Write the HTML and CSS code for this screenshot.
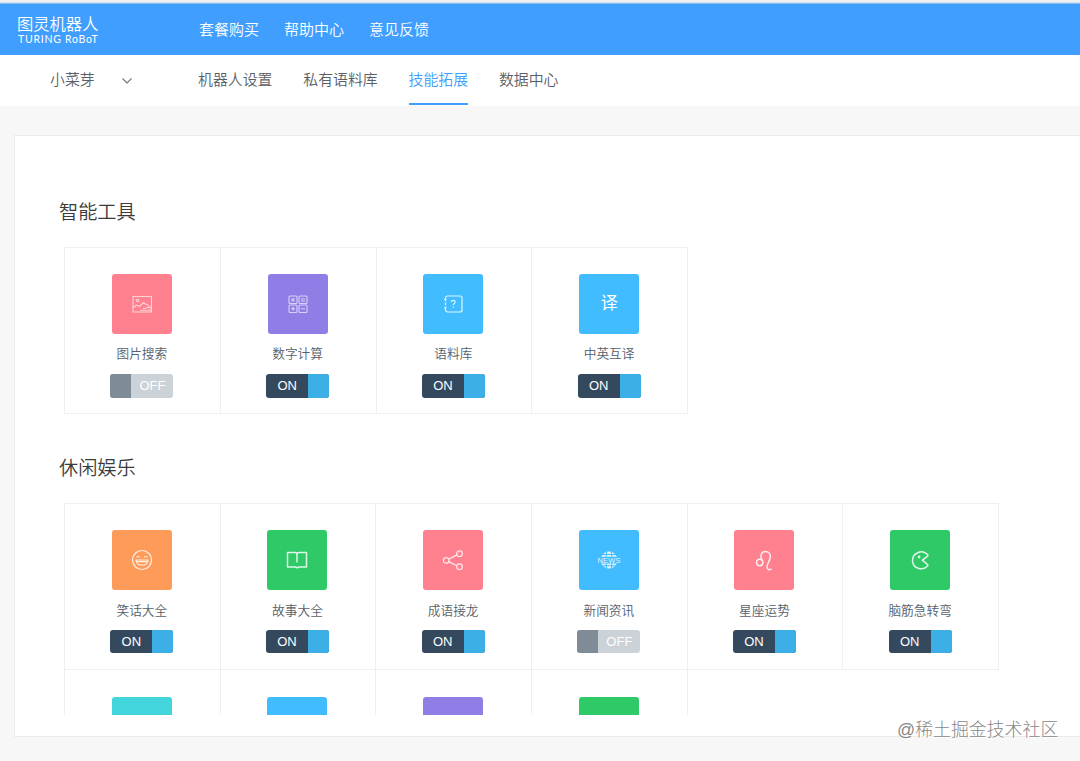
FILE: index.html
```html
<!DOCTYPE html>
<html lang="zh-CN">
<head>
<meta charset="utf-8">
<title>技能拓展</title>
<link rel="stylesheet" href="styles.css">
</head>
<body>
<header class="topbar">
  <div class="logo"><span class="logo-cn">图灵机器人</span><span class="logo-en">TURING RoBoT</span></div>
  <nav class="topnav"><a>套餐购买</a><a>帮助中心</a><a>意见反馈</a></nav>
</header>
<div class="subbar">
  <div class="robot"><span>小菜芽</span><svg width="12" height="8" viewBox="0 0 12 8"><path d="M1.500 1.500 6 6l4.500-4.500"/></svg></div>
  <nav class="tabs"><a>机器人设置</a><a>私有语料库</a><a class="active">技能拓展</a><a>数据中心</a></nav>
</div>
<main class="panel">
  <div class="scroll">
    <section>
      <h2>智能工具</h2>
      <div class="grid four">
        <div class="card"><div class="tile pink"><svg class="dim" viewBox="0 0 24 24"><path d="M3 4.500h18.500v15.500H3zM3.500 15.500l3-2.500 3 1.500 4-4 2.500 2 2 .5 3 3.500M13 16.500h3M10 18.200h11M16 15.500h5"/><circle cx="7.500" cy="8.500" r="1.300"/></svg></div><p>图片搜索</p><div class="switch off"><i></i><b>OFF</b></div></div>
        <div class="card"><div class="tile purple"><svg class="dim" viewBox="0 0 24 24"><rect x="3" y="4" width="8" height="7.500" rx="1"/><rect x="13" y="4" width="8" height="7.500" rx="1"/><rect x="3" y="13" width="8" height="7.500" rx="1"/><rect x="13" y="13" width="8" height="7.500" rx="1"/><path d="m5.500 6.300 3 3m0-3-3 3M15 7h4M15 9h4M5 16.700h4M7 14.700v4M15 16.700h4"/></svg></div><p>数字计算</p><div class="switch on"><b>ON</b><i></i></div></div>
        <div class="card"><div class="tile blue"><svg viewBox="0 0 24 24"><rect x="4.500" y="4" width="16.500" height="16" rx="2"/><path class="blue-gap" d="M4.500 9v1.500M4.500 13v1.500"/><path d="M3 7.500h2.500M3 16h2.500M10.300 10c0-2.200 3.800-2.200 3.800 0 0 1.500-1.900 1.300-1.900 3.300M12.200 14.700v1"/></svg></div><p>语料库</p><div class="switch on"><b>ON</b><i></i></div></div>
        <div class="card"><div class="tile blue"><span class="glyph">译</span></div><p>中英互译</p><div class="switch on"><b>ON</b><i></i></div></div>
      </div>
    </section>
    <section>
      <h2>休闲娱乐</h2>
      <div class="grid six">
        <div class="card"><div class="tile orange"><svg viewBox="0 0 24 24"><circle cx="12" cy="12" r="9.500"/><path d="M6 12h12c0 7-12 7-12 0zM6.800 13.700h10.400M6.500 9.500q1.700-2.500 3.500 0M14 9.500q1.700-2.500 3.500 0"/></svg></div><p>笑话大全</p><div class="switch on"><b>ON</b><i></i></div></div>
        <div class="card"><div class="tile green"><svg class="bold" viewBox="0 0 24 24"><path d="M2.500 4.500H10q2 0 2 2 0-2 2-2h7.500V19H14l-2 .8-2-.8H2.500zM12 6.500v8"/></svg></div><p>故事大全</p><div class="switch on"><b>ON</b><i></i></div></div>
        <div class="card"><div class="tile pink"><svg viewBox="0 0 24 24"><circle cx="5.200" cy="12.400" r="2.800"/><circle cx="18.500" cy="5.700" r="2.800"/><circle cx="18.500" cy="18.700" r="2.800"/><path d="m7.700 11.200 8.200-4.300M7.700 13.600l8.200 4.100"/></svg></div><p>成语接龙</p><div class="switch on"><b>ON</b><i></i></div></div>
        <div class="card"><div class="tile blue"><svg viewBox="0 0 24 24"><path class="fill" d="M4.200 8.800Q7 3.500 12 3.500t7.800 5.300zM4.200 15.400Q7 20.500 12 20.500t7.800-5.100z"/><path class="blue-gap" d="M9.700 3.500 9 8.800M14.300 3.500l.7 5.300M5 6.500h14M9 15.400l.7 5M15 15.400l-.7 5M5 17.800h14"/><text x="12" y="14.900" text-anchor="middle" textLength="23">NEWS</text></svg></div><p>新闻资讯</p><div class="switch off"><i></i><b>OFF</b></div></div>
        <div class="card"><div class="tile pink"><svg class="bold" viewBox="0 0 24 24"><circle cx="7.700" cy="14.500" r="3.200"/><path d="M10 12.300C8.500 9.500 8 3.500 13.500 3.500c4 0 5.500 3.500 4.500 7-1 3.300-3 6-3 8.500 0 2.800 2.500 3.300 4.500 2"/></svg></div><p>星座运势</p><div class="switch on"><b>ON</b><i></i></div></div>
        <div class="card"><div class="tile green"><svg class="bold" viewBox="0 0 24 24"><path d="M19.500 6.500c-5-5.500-15-2-15 5.900 0 8 10 11 15 5.600q.8-1-.2-1.700l-5-4.100 5-3.900q1-.8.2-1.800z"/><circle class="fill" cx="11" cy="9" r="1.400"/></svg></div><p>脑筋急转弯</p><div class="switch on"><b>ON</b><i></i></div></div>
        <div class="card next"><div class="tile teal"></div></div>
        <div class="card next"><div class="tile blue"></div></div>
        <div class="card next"><div class="tile purple"></div></div>
        <div class="card next"><div class="tile green"></div></div>
      </div>
    </section>
  </div>
</main>
<div class="watermark">@稀土掘金技术社区</div>
</body>
</html>
```
FILE: styles.css
```css
* { box-sizing: border-box; }
body {
  margin: 0;
  height: 761px;
  overflow: hidden;
  background: #f7f7f7;
  color: #5a6066;
  font-family: "Liberation Sans", "Noto Sans CJK SC", sans-serif;
  font-weight: 350;
}
.topbar {
  display: flex;
  height: 55px;
  padding-top: 4px;
  background: linear-gradient(#f0f1f3 0 2px, #d3dfeb 2px 3px, #409eff 4px);
  color: #fff;
}
.logo {
  width: 199px;
  padding: 11px 0 0 17px;
  display: flex;
  flex-direction: column;
}
.logo-cn { font-size: 16.300px; line-height: 18px; white-space: nowrap; }
.logo-en { font: 400 10.500px/12px Lato, sans-serif; letter-spacing: .75px; padding-left: 1px; white-space: nowrap; }
.topnav { display: flex; gap: 25px; font-size: 15px; line-height: 51px; }
.subbar {
  display: flex;
  height: 51px;
  background: #fff;
  font-size: 14.900px;
  line-height: 50px;
}
.robot { width: 198px; padding-left: 50px; display: flex; align-items: center; gap: 26px; height: 50px; }
svg { fill: none; stroke: #fff; stroke-width: 1.200; stroke-linejoin: round; }
.robot svg { stroke: #777; stroke-width: 1.100; margin-top: 2px; }
.tabs { display: flex; gap: 30.800px; }
.tabs a { height: 50px; }
.tabs .active { color: #409eff; border-bottom: 2px solid #409eff; }
.panel {
  margin: 29px 0 0 14px;
  height: 602px;
  padding: 58px 0 0 44px;
  background: #fff;
  border: 1px solid #ebebeb;
  border-right: 0;
}
.scroll { height: 521px; overflow: hidden; }
h2 { margin: 0; font-size: 19.200px; line-height: 37px; font-weight: 350; color: #3a3a3a; }
section { height: 256px; }
section + section { height: auto; }
.grid {
  display: grid;
  margin: 16px 0 0 5px;
  border-left: 1px solid #efefef;
  border-top: 1px solid #efefef;
}
.four { width: 624px; grid-template-columns: repeat(4, 1fr); }
.six { width: 935px; grid-template-columns: repeat(6, 1fr); }
.card {
  height: 166px;
  padding: 26px 1px 0 0;
  border-right: 1px solid #efefef;
  border-bottom: 1px solid #efefef;
  display: flex;
  flex-direction: column;
  align-items: center;
}
.next { padding-top: 27px; }
.tile { width: 60px; height: 60px; border-radius: 3px; display: grid; place-items: center; color: #fff; }
.tile svg { width: 24px; height: 24px; opacity: .85; overflow: visible; }
.tile svg.dim { opacity: .65; stroke-width: 1.100; }
.tile svg.bold { stroke-width: 1.500; }
.tile .fill { fill: #fff; stroke: none; }
.tile .blue-gap { stroke: #40bcff; stroke-width: 1; }
.tile text { fill: #fff; stroke: none; font: 400 7.500px "Liberation Sans", sans-serif; }
.glyph { font-size: 17px; font-weight: 400; line-height: 24px; }
.pink { background: #ff8190; }
.purple { background: #917de6; }
.blue { background: #40bcff; }
.orange { background: #ff9b58; }
.green { background: #30c967; }
.teal { background: #42d5db; }
.card p { margin: 11px 0 0; font-size: 12.700px; line-height: 18px; color: #56606a; }
.six p { margin-top: 12px; }
.switch {
  width: 63px;
  height: 24px;
  margin-top: 10.500px;
  border-radius: 3px;
  overflow: hidden;
  display: flex;
  color: #fff;
  font-size: 13px;
  line-height: 24px;
}
.six .switch { height: 23px; margin-top: 9.500px; }
.switch i { width: 21px; }
.switch b { width: 42px; font-weight: 400; text-align: center; }
.on { background: #34495e; }
.on i { background: #3cafe7; }
.off { background: #cbd2d8; }
.off i { background: #7f8c97; }
.watermark {
  position: absolute;
  left: 897px;
  top: 717px;
  font-size: 17.900px;
  line-height: 26px;
  color: #888;
  font-weight: 300;
  white-space: nowrap;
  text-shadow: 0 0 2px #fff, 1px 1px 0 #fff;
}
```
